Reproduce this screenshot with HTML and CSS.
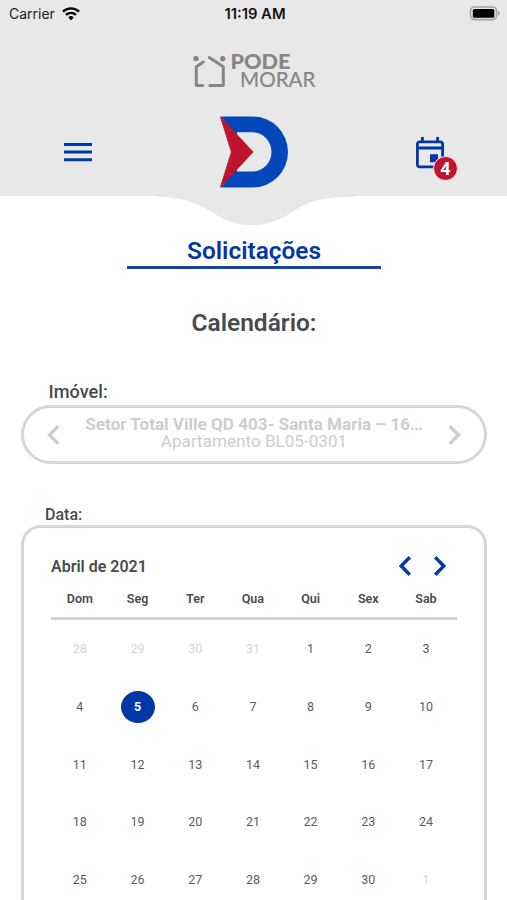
FILE: index.html
```html
<!DOCTYPE html>
<html lang="pt-BR">
<head>
    <meta charset="UTF-8">
    <meta name="viewport" content="width=device-width, initial-scale=1.0">
    <title>Solicitações</title>
    <link rel="stylesheet" href="styles.css">
</head>
<body>
    <!-- Header -->
    <header class="header">
        <div class="status-bar">
            <div class="carrier">
                <span>Carrier</span>
                <svg width="18" height="14" viewBox="0 0 18 14" fill="none" stroke="#000" stroke-width="2.4">
                    <path d="M1 4.7a11.4 11.4 0 0 1 16 0"/>
                    <path d="M4 7.9a7.1 7.1 0 0 1 10 0"/>
                    <path d="M6.3 10.4a3.8 3.8 0 0 1 5.4 0L9 13.2z" fill="#000" stroke="none"/>
                </svg>
            </div>
            <span class="clock">11:19 AM</span>
            <svg class="battery" width="32" height="16" viewBox="0 0 32 16">
                <rect x="1.500" y="1" width="26" height="12.600" rx="4" fill="#e8e8e8" stroke="#a3a3a3" stroke-width="1.6"/>
                <rect x="3.800" y="3" width="21.500" height="8.800" rx="1.500" fill="#000"/>
                <path d="M29 4.800c2.3 1 2.3 4 0 5z" fill="#a3a3a3"/>
            </svg>
        </div>

        <div class="brand">
            <svg width="124" height="38" viewBox="0 0 124 38">
                <g fill="none" stroke="#868686" stroke-width="3" stroke-linecap="round" stroke-linejoin="round">
                    <path d="M11.300 10 4.300 14.800v18.600h6.400"/>
                    <path d="M17.300 5.500 31.300 14.800v18.600H17.800"/>
                </g>
                <circle cx="4" cy="6.600" r="2.700" fill="#868686"/>
                <circle cx="30.800" cy="6.700" r="2.700" fill="#868686"/>
                <text class="brand-pode" x="38.500" y="17" textLength="60" lengthAdjust="spacingAndGlyphs">PODE</text>
                <text class="brand-morar" x="48" y="35.200" textLength="75.500" lengthAdjust="spacingAndGlyphs">MORAR</text>
            </svg>
        </div>

        <div class="nav">
            <svg class="menu" width="28" height="20" viewBox="0 0 28 20" fill="#0039a6">
                <path d="M0 1h28v3H0zM0 8.6h28v3H0zM0 16.2h28v3H0z"/>
            </svg>
            <svg class="logo" width="70" height="72" viewBox="0 0 70 72">
                <path d="M1.500 .500H34a35 35.500 0 0 1 0 71H1.500L18 52v3.500h15.500a19 19.600 0 0 0 0-39.200H18V20z" fill="#0447b8"/>
                <path d="M1.500 1 34 36 1.500 71 12.500 36z" fill="#be142d" stroke="#be142d" stroke-linejoin="round"/>
            </svg>
            <div class="schedule">
                <svg width="28" height="32" viewBox="0 0 28 32">
                    <rect x="1.4" y="4.9" width="25.2" height="25" rx="2.2" fill="none" stroke="#0039a6" stroke-width="2.8"/>
                    <path d="M5 0h2.8v5H5zM20.2 0H23v5h-2.8zM1 9.6h26v2.8H1zM14 17.2h8v8h-8z" fill="#0039a6"/>
                </svg>
                <span class="badge">4</span>
            </div>
        </div>

        <svg class="wave" width="200" height="30" viewBox="0 0 200 30">
            <path d="M0 0v.8c25 .4 36 4 56 15.5C70 25 79 29 96 29s27-4.500 42-14C155 4 167 .8 200 .8V0z" fill="#e8e8e8"/>
        </svg>
    </header>

    <!-- Main Content -->
    <main class="content">
        <h1>Solicitações</h1>
        <h2>Calendário:</h2>

        <p class="label">Imóvel:</p>
        <div class="property">
            <svg width="13" height="20" viewBox="0 0 13 20" fill="none" stroke="#cdcdcd" stroke-width="3.4">
                <path d="M11.300 1.300 2.500 10l8.800 8.700"/>
            </svg>
            <div class="property-text">
                <strong>Setor Total Ville QD 403- Santa Maria – 16…</strong>
                <span>Apartamento BL05-0301</span>
            </div>
            <svg width="13" height="20" viewBox="0 0 13 20" fill="none" stroke="#cdcdcd" stroke-width="3.4">
                <path d="M1.700 1.300 10.500 10l-8.800 8.700"/>
            </svg>
        </div>

        <p class="label label-date">Data:</p>
        <div class="calendar">
            <div class="calendar-header">
                <h3>Abril de 2021</h3>
                <div class="arrows">
                    <svg width="12" height="20" viewBox="0 0 12 20" fill="none" stroke="#0039a6" stroke-width="3.4">
                        <path d="M10.800 1.300 2.200 10l8.600 8.700"/>
                    </svg>
                    <svg width="12" height="20" viewBox="0 0 12 20" fill="none" stroke="#0039a6" stroke-width="3.4">
                        <path d="M1.200 1.300 9.800 10l-8.600 8.700"/>
                    </svg>
                </div>
            </div>
            <div class="weekdays">
                <span>Dom</span><span>Seg</span><span>Ter</span><span>Qua</span><span>Qui</span><span>Sex</span><span>Sab</span>
            </div>
            <div class="days">
                <span class="out">28</span><span class="out">29</span><span class="out">30</span><span class="out">31</span><span>1</span><span>2</span><span>3</span>
                <span>4</span><span class="selected">5</span><span>6</span><span>7</span><span>8</span><span>9</span><span>10</span>
                <span>11</span><span>12</span><span>13</span><span>14</span><span>15</span><span>16</span><span>17</span>
                <span>18</span><span>19</span><span>20</span><span>21</span><span>22</span><span>23</span><span>24</span>
                <span>25</span><span>26</span><span>27</span><span>28</span><span>29</span><span>30</span><span class="out">1</span>
            </div>
        </div>
    </main>
</body>
</html>
```
FILE: styles.css
```css
/* General Styles */
* {
    box-sizing: border-box;
}

body {
    font-family: Roboto, sans-serif;
    margin: 0;
    height: 900px;
    overflow: hidden;
    background-color: #fff;
    color: #4a4a4c;
}

svg {
    display: block;
    flex: none;
    overflow: visible;
}

h1, h2, h3, p {
    margin: 0;
}

/* Header Styles */
.header {
    position: relative;
    height: 196px;
    background-color: #e8e8e8;
}

.status-bar {
    display: grid;
    grid-template-columns: 1fr auto 1fr;
    align-items: center;
    height: 27px;
    padding: 0 6px 0 9px;
    font-family: Inter, sans-serif;
    font-size: 14px;
    color: #222;
}

.carrier {
    display: flex;
    align-items: center;
    gap: 7px;
}

.clock {
    font-weight: 600;
    font-size: 14.8px;
    color: #111;
}

.battery {
    justify-self: end;
}

.brand {
    display: flex;
    justify-content: center;
    padding-top: 25px;
}

.brand-pode,
.brand-morar {
    font-family: Lato, sans-serif;
    fill: #868686;
}

.brand-pode {
    font-size: 20px;
    font-weight: 900;
}

.brand-morar {
    font-size: 21px;
    font-weight: 400;
    stroke: #868686;
    stroke-width: 0.2px;
}

.nav {
    display: flex;
    justify-content: space-between;
    align-items: center;
    padding: 26px 63px 0 64px;
}

.schedule {
    position: relative;
    padding-top: 2px;
}

.badge {
    position: absolute;
    left: 17px;
    top: 21px;
    width: 25px;
    height: 25px;
    border: 1px solid #f3e4e6;
    border-radius: 50%;
    background-color: #be142d;
    color: #fff;
    font-size: 18px;
    font-weight: 700;
    line-height: 23px;
    text-align: center;
}

.wave {
    position: absolute;
    left: 156px;
    top: 196px;
}

/* Content Styles */
.content {
    padding: 40px 20px 0 21px;
}

h1 {
    width: 254px;
    height: 33px;
    margin: 0 auto;
    border-bottom: 3px solid #0f46ab;
    color: #0039a6;
    font-size: 24.4px;
    font-weight: 600;
    line-height: 30px;
    text-align: center;
}

h2 {
    margin-top: 39px;
    font-size: 24.5px;
    font-weight: 600;
    line-height: 30px;
    text-align: center;
}

.label {
    margin: 42px 0 0 27.500px;
    font-size: 18.2px;
    font-weight: 500;
    line-height: 24px;
}

.property {
    display: flex;
    align-items: center;
    justify-content: space-between;
    height: 59px;
    margin-top: 1px;
    padding: 0 23px;
    border: 3px solid #d6d6d6;
    border-radius: 30px;
    color: #cdcdcd;
}

.property-text {
    display: flex;
    flex-direction: column;
    align-items: center;
    padding-bottom: 3px;
    font-size: 17.1px;
    line-height: 17px;
    white-space: nowrap;
}

.property-text strong {
    font-weight: 700;
}

.label-date {
    margin: 40px 0 0 24px;
    font-size: 16px;
    line-height: 21px;
}

/* Calendar Styles */
.calendar {
    height: 420px;
    padding: 24px 27px 0;
    border: 3px solid #d6d6d6;
    border-radius: 20px;
}

.calendar-header {
    display: flex;
    justify-content: space-between;
    align-items: center;
    height: 28px;
}

.calendar-header h3 {
    font-size: 16px;
    font-weight: 600;
}

.arrows {
    display: flex;
    gap: 23px;
    margin-right: 11px;
}

.weekdays,
.days {
    display: grid;
    grid-template-columns: repeat(7, 57.7px);
    justify-items: center;
    align-items: center;
}

.weekdays {
    height: 40px;
    border-bottom: 3px solid #d3d3d3;
    font-size: 12.5px;
    font-weight: 600;
}

.days {
    grid-auto-rows: 57.7px;
    font-size: 12.5px;
    color: #5c5c5e;
}

.days .out {
    color: #d4d4d4;
}

.days .selected {
    width: 34px;
    height: 32px;
    border-radius: 50%;
    background-color: #0039a6;
    color: #fff;
    font-weight: 700;
    line-height: 31px;
    text-align: center;
}
```
